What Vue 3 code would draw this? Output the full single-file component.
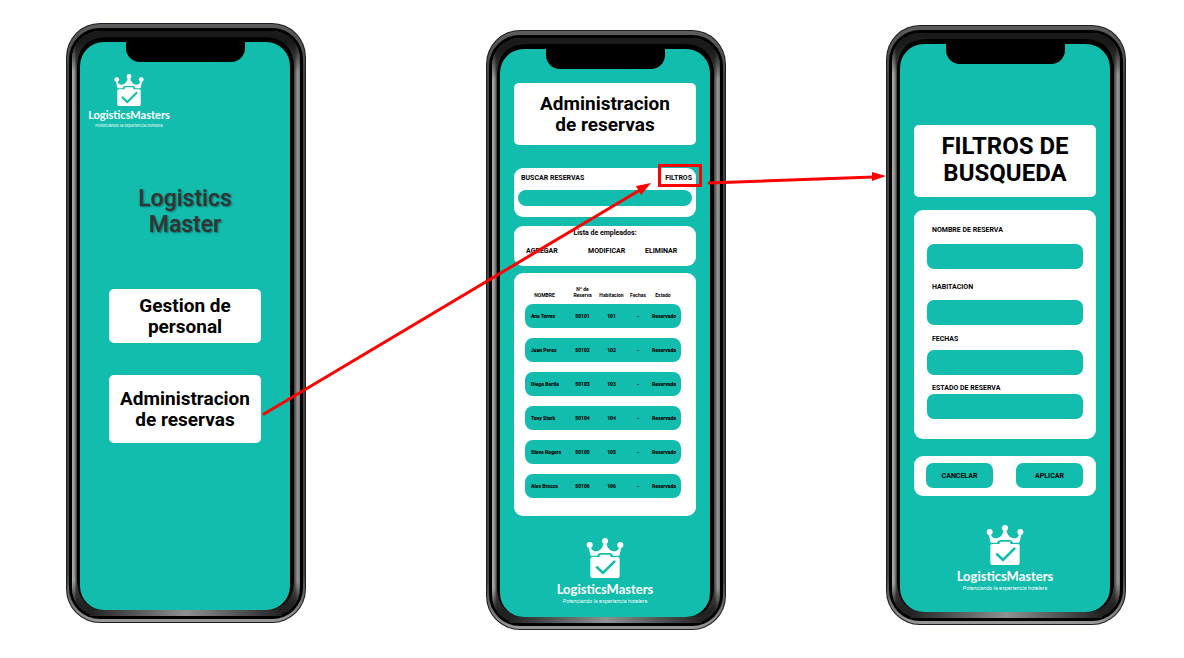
<script setup>
import { h } from 'vue'

const reservas = [
  { nombre: 'Ana Torres', numero: '50101', habitacion: '101' },
  { nombre: 'Juan Perez', numero: '50102', habitacion: '102' },
  { nombre: 'Diego Bertle', numero: '50103', habitacion: '103' },
  { nombre: 'Tony Stark', numero: '50104', habitacion: '104' },
  { nombre: 'Steve Rogers', numero: '50105', habitacion: '105' },
  { nombre: 'Alex Brocca', numero: '50106', habitacion: '106' },
]

const campos = [
  { id: 'nombre', etiqueta: 'NOMBRE DE RESERVA' },
  { id: 'habitacion', etiqueta: 'HABITACION' },
  { id: 'fechas', etiqueta: 'FECHAS' },
  { id: 'estado', etiqueta: 'ESTADO DE RESERVA' },
]

// Device body: nested rounded shells plus the bezel
const shell = (x, y, width, height, rx, fill) => h('rect', { x, y, width, height, rx, fill })
const PhoneFrame = () =>
  h('svg', { class: 'frame', viewBox: '0 0 240 600', 'aria-hidden': 'true' }, [
    shell(0, 0, 240, 600, 34, '#1d1b25'),
    shell(1, 1, 238, 598, 33, 'url(#rim)'),
    shell(3, 5, 234, 591, 31, '#000'),
    shell(6, 8, 228, 585, 28, 'url(#side)'),
    shell(6, 8, 228, 585, 28, 'url(#top-shade)'),
    shell(6, 8, 228, 585, 28, 'url(#foot-mask)'),
    h('path', { d: 'M24 587H216V593H24Z', fill: 'url(#foot)' }),
    h('path', { d: 'M11 46Q11 14 43 14H197Q228 14 228 46V556Q228 587 197 587H43Q11 587 11 556Z', fill: '#000' }),
  ])

const BrandLogo = () =>
  h('div', { class: 'logo' }, [
    h('svg', { class: 'logo-mark', viewBox: '0 0 112 120', 'aria-hidden': 'true' }, [
      h('g', { fill: '#fff' }, [
        h('circle', { cx: 10, cy: 21, r: 9 }),
        h('circle', { cx: 56, cy: 9, r: 9 }),
        h('circle', { cx: 102, cy: 21, r: 9 }),
        h('path', {
          d: 'M6 24L13 53H32Q34 45 42 45H70Q78 45 80 53H99L106 24L99 27C96 37 90 41 82 40C70 38 63 30 60 14H52C49 30 42 38 30 40C22 41 16 37 13 27Z',
        }),
        h('rect', { x: 12, y: 57, width: 88, height: 63, rx: 6 }),
        h('rect', { x: 40, y: 50, width: 32, height: 12, rx: 3 }),
      ]),
      h('path', { d: 'M32 88L50 105L84 71', fill: 'none', stroke: '#12bdae', 'stroke-width': 8, 'stroke-linecap': 'round' }),
    ]),
    h('span', { class: 'logo-name' }, 'LogisticsMasters'),
    h('span', { class: 'logo-tag' }, 'Potenciando la experiencia hotelera'),
  ])
</script>

<template>
  <main class="flow">
    <svg class="defs" width="0" height="0" aria-hidden="true">
      <defs>
        <linearGradient id="rim" x1="0" y1="0" x2="0" y2="1">
          <stop offset="0" stop-color="#5c5c5c" />
          <stop offset="0.08" stop-color="#444" />
          <stop offset="0.92" stop-color="#444" />
          <stop offset="0.97" stop-color="#777" />
          <stop offset="1" stop-color="#999" />
        </linearGradient>
        <linearGradient id="side" x1="0" y1="0" x2="1" y2="0">
          <stop offset="0" stop-color="#aaa" />
          <stop offset="0.01" stop-color="#999" />
          <stop offset="0.02" stop-color="#444" />
          <stop offset="0.975" stop-color="#444" />
          <stop offset="0.99" stop-color="#999" />
          <stop offset="1" stop-color="#777" />
        </linearGradient>
        <linearGradient id="top-shade" x1="0" y1="0" x2="0" y2="1">
          <stop offset="0" stop-color="#1a1a1a" />
          <stop offset="0.02" stop-color="#1a1a1a" />
          <stop offset="0.07" stop-color="#1a1a1a" stop-opacity="0" />
        </linearGradient>
        <linearGradient id="foot-mask" x1="0" y1="0" x2="0" y2="1">
          <stop offset="0.94" stop-color="#222" stop-opacity="0" />
          <stop offset="0.98" stop-color="#222" />
        </linearGradient>
        <linearGradient id="foot" x1="0" y1="0" x2="1" y2="0">
          <stop offset="0" stop-color="#222" />
          <stop offset="0.5" stop-color="#919191" />
          <stop offset="1" stop-color="#222" />
        </linearGradient>
      </defs>
    </svg>

    <section class="phone phone-home" aria-label="Inicio">
      <PhoneFrame />
      <div class="notch"></div>
      <div class="screen">
        <BrandLogo />
        <h1 class="app-title">Logistics<br />Master</h1>
        <button class="menu-button" type="button">Gestion de<br />personal</button>
        <button class="menu-button tall" type="button">Administracion<br />de reservas</button>
      </div>
    </section>

    <section class="phone phone-list" aria-label="Administracion de reservas">
      <PhoneFrame />
      <div class="notch"></div>
      <div class="screen">
        <h2 class="card heading">Administracion<br />de reservas</h2>
        <div class="card search">
          <div class="search-head">
            <label for="buscar">BUSCAR RESERVAS</label>
            <button type="button">FILTROS</button>
          </div>
          <input id="buscar" type="text" />
        </div>
        <div class="card tools">
          <p>Lista de empleados:</p>
          <div class="tool-row">
            <button type="button">AGREGAR</button>
            <button type="button">MODIFICAR</button>
            <button type="button">ELIMINAR</button>
          </div>
        </div>
        <div class="card listing">
          <table>
            <colgroup>
              <col class="c-name" /><col class="c-num" /><col class="c-room" /><col class="c-date" /><col class="c-state" />
            </colgroup>
            <thead>
              <tr>
                <th>NOMBRE</th>
                <th>Nº de Reserva</th>
                <th>Habitacion</th>
                <th>Fechas</th>
                <th>Estado</th>
              </tr>
            </thead>
            <tbody>
              <tr v-for="r in reservas" :key="r.numero">
                <td><span>{{ r.nombre }}</span></td>
                <td><span>{{ r.numero }}</span></td>
                <td><span>{{ r.habitacion }}</span></td>
                <td><span>-</span></td>
                <td><span>Reservado</span></td>
              </tr>
            </tbody>
          </table>
        </div>
        <BrandLogo />
      </div>
    </section>

    <section class="phone phone-filter" aria-label="Filtros de busqueda">
      <PhoneFrame />
      <div class="notch"></div>
      <div class="screen">
        <h2 class="card heading large">FILTROS DE<br />BUSQUEDA</h2>
        <form id="filtros" class="card fields" @submit.prevent>
          <div v-for="c in campos" :key="c.id" class="field">
            <label :for="c.id">{{ c.etiqueta }}</label>
            <input :id="c.id" type="text" />
          </div>
        </form>
        <div class="card actions">
          <button type="button">CANCELAR</button>
          <button type="submit" form="filtros">APLICAR</button>
        </div>
        <BrandLogo />
      </div>
    </section>

    <svg class="arrows" width="1184" height="658" viewBox="0 0 1184 658" aria-hidden="true">
      <g fill="none" stroke="#f00" stroke-width="3" stroke-linecap="round">
        <path d="M264 414L640 190" />
        <path d="M709 183L874 177" />
        <rect x="659.500" y="165.500" width="41" height="20" />
      </g>
      <path d="M651 183L636 186L641 195Z" fill="#f00" />
      <path d="M886 176L872 172V181Z" fill="#f00" />
    </svg>
  </main>
</template>

<style>
body {
  margin: 0;
  background: #fff;
}
</style>

<style scoped>
.flow {
  --teal: #12bdae;
  position: relative;
  display: flex;
  align-items: flex-start;
  box-sizing: border-box;
  width: max-content;
  margin: 0 auto;
  padding: 0 58px 28px 66px;
  font-family: Roboto, "Liberation Sans", sans-serif;
  color: #000;
}
.defs,
.arrows {
  position: absolute;
  left: 0;
  top: 0;
  pointer-events: none;
}
.phone {
  position: relative;
  box-sizing: border-box;
  width: 240px;
  padding: 19px 16px 13px 14px;
}
.phone-home { margin-top: 23px; }
.phone-list { margin-top: 30px; margin-left: 180px; }
.phone-filter { margin-top: 25px; margin-left: 160px; }
.frame {
  position: absolute;
  inset: 0;
  width: 100%;
  height: 100%;
}
.notch {
  position: absolute;
  z-index: 1;
  top: 18px;
  left: 60px;
  width: 119px;
  height: 21px;
  border-radius: 0 0 14px 14px;
  background: #000;
}
.screen {
  position: relative;
  display: flex;
  flex-direction: column;
  box-sizing: border-box;
  min-height: 568px;
  padding: 0 14px;
  border-radius: 24px;
  background: var(--teal);
}
button {
  margin: 0;
  padding: 0;
  border: 0;
  background: none;
  font: inherit;
  color: inherit;
  cursor: pointer;
}
input {
  display: block;
  box-sizing: border-box;
  width: 100%;
  margin: 0;
  padding: 0 8px;
  border: 0;
  background: var(--teal);
  font: inherit;
}
h1, h2, p { margin: 0; }

:deep(.logo) {
  display: flex;
  flex-direction: column;
  align-items: center;
  color: #fff;
  font-family: Inter, sans-serif;
  white-space: nowrap;
}
:deep(.logo-mark) { width: 38px; height: 40px; }
:deep(.logo-name) {
  margin-top: 3px;
  font-family: Lato, sans-serif;
  font-size: 13px;
  line-height: 16px;
  font-weight: 700;
}
:deep(.logo-tag) { font-size: 5px; line-height: 8px; }

.phone-home .screen { padding-top: 32px; }
.phone-home :deep(.logo) { align-self: flex-start; width: 78px; margin-left: -4px; }
.phone-home :deep(.logo-mark) { width: 30px; height: 32px; }
.phone-home :deep(.logo-name) { margin-top: 2px; font-size: 11px; line-height: 14px; }
.phone-home :deep(.logo-tag) { font-size: 4px; line-height: 7px; }
.app-title {
  margin-top: 57px;
  text-align: center;
  font-size: 23px;
  line-height: 26px;
  font-weight: 500;
  color: #333;
  text-shadow: 1px 1px 2px rgba(0, 0, 0, 0.45);
}
.menu-button {
  margin: 51px 15px 0;
  height: 54px;
  border-radius: 5px;
  background: #fff;
  font-size: 19px;
  line-height: 21px;
  font-weight: 700;
}
.menu-button.tall { margin-top: 32px; height: 68px; }

.card { border-radius: 9px; background: #fff; }
.heading {
  display: flex;
  align-items: center;
  justify-content: center;
  box-sizing: border-box;
  height: 62px;
  border-radius: 5px;
  text-align: center;
  font-size: 19px;
  line-height: 21px;
  font-weight: 700;
}
.phone-list .screen { padding-top: 34px; }
.search {
  margin-top: 23px;
  padding: 5px 4px 11px;
}
.search-head {
  display: flex;
  justify-content: space-between;
  padding: 0 0 7px 3px;
  font-size: 7px;
  line-height: 10px;
  font-weight: 700;
}
.search input { height: 16px; border-radius: 8px; }
.tools {
  margin-top: 9px;
  padding: 2px 0 10px;
  font-size: 7px;
  line-height: 10px;
  font-weight: 700;
}
.tools p { text-align: center; }
.tool-row {
  display: grid;
  grid-template-columns: 62px 57px auto;
  justify-content: start;
  justify-items: start;
  padding: 8px 12px 0;
}
.listing {
  margin-top: 7px;
  padding: 13px 15px 8px 11px;
}
table {
  width: 100%;
  table-layout: fixed;
  border-collapse: separate;
  border-spacing: 0;
  font-size: 5px;
  line-height: 6px;
  font-weight: 700;
}
.c-name { width: 43px; }
.c-num { width: 29px; }
.c-room { width: 29px; }
.c-date { width: 24px; }
.c-state { width: 31px; }
th, td { padding: 0; text-align: center; }
th { padding-bottom: 6px; vertical-align: bottom; }
th:first-child { padding-right: 4px; }
th:last-child { padding-right: 5px; }
td { padding-bottom: 10px; font-weight: 900; white-space: nowrap; }
td span {
  display: block;
  height: 24px;
  line-height: 24px;
  background: var(--teal);
}
td:first-child span { padding-left: 6px; text-align: left; border-radius: 8px 0 0 8px; }
td:last-child span { padding-right: 3px; border-radius: 0 8px 8px 0; }
.phone-list .listing + :deep(.logo) { margin-top: 22px; }

.phone-filter .screen { padding-top: 81px; }
.heading.large { height: 72px; padding-bottom: 3px; font-size: 24px; line-height: 27px; }
.fields {
  margin-top: 13px;
  padding: 15px 13px 20px;
  font-size: 7px;
  font-weight: 700;
}
.field label {
  display: block;
  padding: 0 0 8px 5px;
  line-height: 10px;
}
.field + .field { padding-top: 8px; }
.field:nth-child(1) label { padding-bottom: 9px; }
.field:nth-child(2) { padding-top: 13px; }
.field:nth-child(3) { padding-top: 9px; }
.field:nth-child(3) label { padding-bottom: 6px; }
.field:nth-child(4) label { padding-bottom: 1px; }
.field input { height: 25px; border-radius: 7px; }
.actions {
  display: flex;
  justify-content: space-between;
  margin-top: 17px;
  padding: 7px 13px 8px 12px;
  font-size: 7px;
  line-height: 10px;
  font-weight: 700;
}
.actions button {
  width: 67px;
  height: 25px;
  border-radius: 7px;
  background: var(--teal);
}
.phone-filter .actions + :deep(.logo) { margin-top: 29px; }
</style>
